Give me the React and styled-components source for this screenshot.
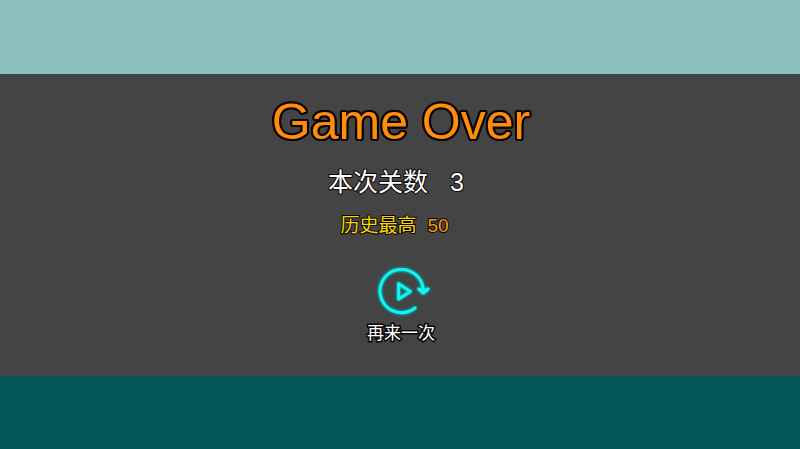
import React, { useState } from 'react';
import styled, { createGlobalStyle } from 'styled-components';

const Colors = {
    Sky: '#8bbfbc',
    Panel: '#444444',
    Sea: '#035757',
    Title: '#ff8c0f',
    TextWhite: '#ffffff',
    Gold: '#f6d80c',
    Amber: '#f59a1b',
    Neon: '#16f2ee',
    Glow: '#00a9b0',
    Outline: '#0c0606',
};

const GlobalStyle = createGlobalStyle`
    body {
        margin: 0;
        font-family: "Liberation Sans", "Noto Sans CJK SC", sans-serif;
    }
`;

const Screen = styled.div`
    display: grid;
    grid-template-rows: 74fr auto 73fr;
    min-height: 100vh;
    background: linear-gradient(${Colors.Sky} 50%, ${Colors.Sea} 50%);
`;

const Panel = styled.main`
    grid-row: 2;
    display: flex;
    flex-direction: column;
    align-items: center;
    padding: 18px 0 30px 2px;
    background-color: ${Colors.Panel};
`;

const Title = styled.h1`
    margin: 0 0 8px;
    font-size: 50px;
    font-weight: normal;
    line-height: 60px;
    color: ${Colors.Title};
    text-shadow:
        2px 0 ${Colors.Outline}, -2px 0 ${Colors.Outline},
        0 2px ${Colors.Outline}, 0 -2px ${Colors.Outline},
        1px 2px ${Colors.Outline}, -1px 2px ${Colors.Outline},
        1px -2px ${Colors.Outline}, -1px -2px ${Colors.Outline},
        2px 1px ${Colors.Outline}, -2px 1px ${Colors.Outline},
        2px -1px ${Colors.Outline}, -2px -1px ${Colors.Outline};
`;

const Score = styled.p`
    display: flex;
    margin: 0;
    gap: ${props => props.$small ? '11px' : '22px'};
    font-size: ${props => props.$small ? '19px' : '25px'};
    line-height: 44px;
    color: ${props => props.$small ? Colors.Gold : Colors.TextWhite};
    -webkit-text-stroke: 2px ${Colors.Outline};
    paint-order: stroke fill;
`;

const ScoreValue = styled.span`
    min-width: ${props => props.$small ? '34px' : '24px'};
    color: ${props => props.$small ? Colors.Amber : Colors.TextWhite};
`;

const RetryButton = styled.button`
    display: flex;
    flex-direction: column;
    align-items: center;
    margin-top: 14px;
    padding: 0;
    border: none;
    background: none;
    font-family: inherit;
    font-size: 17px;
    line-height: 24px;
    color: ${Colors.TextWhite};
    -webkit-text-stroke: 3px ${Colors.Outline};
    paint-order: stroke fill;
    cursor: pointer;
`;

const RetryIcon = styled.svg`
    width: 60px;
    height: 60px;
    fill: none;
    stroke: ${Colors.Neon};
    stroke-width: 3;
    stroke-linecap: round;
    stroke-linejoin: round;
    filter: drop-shadow(0 0 1px ${Colors.Glow}) drop-shadow(0 0 1px ${Colors.Glow});
`;

const App = () => {

    const [level, setLevel] = useState(3);

    return (
        <Screen>
            <GlobalStyle />
            <Panel>
                <Title>Game Over</Title>
                <Score>
                    <span>本次关数</span>
                    <ScoreValue>{level}</ScoreValue>
                </Score>
                <Score $small>
                    <span>历史最高</span>
                    <ScoreValue $small>50</ScoreValue>
                </Score>
                <RetryButton type='button' onClick={() => setLevel(1)}>
                    <RetryIcon viewBox='0 0 60 60' aria-hidden='true'>
                        <path d='M44 46A21.6 21.6 0 1 1 52.2 30' />
                        <path d='M47.8 27L52.4 31L57 27L52.4 28.6Z' />
                        <path d='M27.6 21.7V37.1L39.4 29.4Z' />
                    </RetryIcon>
                    再来一次
                </RetryButton>
            </Panel>
        </Screen>
    );
}

export default App;
